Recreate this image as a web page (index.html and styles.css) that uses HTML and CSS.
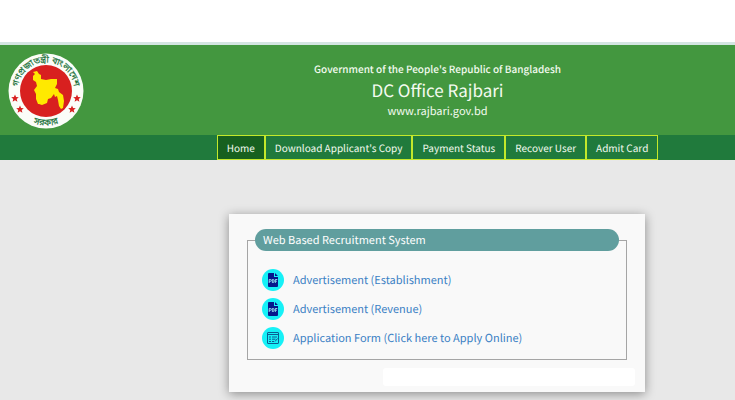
FILE: index.html
```html
<!DOCTYPE html>
<html lang="en">
  <head>
    <meta charset="utf-8" />
    <meta name="viewport" content="width=device-width, initial-scale=1.0" />
    <title>DC Office Rajbari</title>
    <link rel="stylesheet" href="styles.css">
  </head>

  <body>
    <header class="header">
      <a class="logo" href="#" aria-label="Government of Bangladesh">
        <svg viewBox="0 0 76 76" width="76" height="76">
          <defs>
            <path id="arc-top" d="M10.500 44 A28.200 28.200 0 1 1 65.500 44" />
            <path id="arc-bottom" d="M8 55 A34.500 34.500 0 0 0 68 55" />
          </defs>
          <circle cx="38" cy="38" r="37.500" fill="#fbfdf8" />
          <circle cx="38" cy="38" r="26" fill="#d8201f" />
          <path fill="#ffe900" d="M25 19l4-1 2 3 2 1 0 4 5 1 5-1 6 0 0 5-2 4 3 1 1 3 4 3 1 6-1 7-2 1-2-3-1-6-1-4-2 1-1-3-3 4-3 1-1 4-5 2-3-1-1 0-2-5 0-5-2-4 3-4-1-4-3-2 0-4 2-2z" />
          <text class="seal-text"><textPath href="#arc-top" startOffset="50%">গণপ্রজাতন্ত্রী বাংলাদেশ</textPath></text>
          <text class="seal-text"><textPath href="#arc-bottom" startOffset="50%">সরকার</textPath></text>
          <g fill="#d8201f">
            <path id="star" d="M7 41.500l1.100 2.500 2.700.2-2.100 1.800.7 2.700L7 47.300l-2.400 1.400.7-2.700-2.100-1.800 2.700-.2z" />
            <use href="#star" x="5" y="11" />
            <use href="#star" x="62" />
            <use href="#star" x="57" y="11" />
          </g>
        </svg>
      </a>
      <div class="title">
        <p class="gov">Government of the People's Republic of Bangladesh</p>
        <h1 class="office">DC Office Rajbari</h1>
        <p class="site">www.rajbari.gov.bd</p>
      </div>
    </header>

    <nav class="menu">
      <a class="menu-item active" href="#">Home</a>
      <a class="menu-item" href="#">Download Applicant's Copy</a>
      <a class="menu-item" href="#">Payment Status</a>
      <a class="menu-item" href="#">Recover User</a>
      <a class="menu-item" href="#">Admit Card</a>
    </nav>

    <main class="content">
      <section class="card">
        <fieldset class="box">
          <legend class="box-title">Web Based Recruitment System</legend>
          <ul class="links">
            <li>
              <a class="link" href="#">
                <svg class="icon" viewBox="0 0 22 22" width="22" height="22">
                  <circle cx="11" cy="11" r="11" fill="#16f1f7" />
                  <path fill="#06188c" d="M7 4h5v4h4v9q0 1-1 1H7q-1 0-1-1V5q0-1 1-1zM13 4l3 3h-3z" />
                  <path fill="none" stroke="#9ceaf5" stroke-width=".9" d="M7.200 14v-3.500h1.300q.8 0 .8.900t-.8.900H7.200M10.300 10.500v3h.7q1.200 0 1.200-1.500t-1.200-1.500zM13.300 14v-3.500h2M13.300 12.200h1.600" />
                </svg>
                <span>Advertisement (Establishment)</span>
              </a>
            </li>
            <li>
              <a class="link" href="#">
                <svg class="icon" viewBox="0 0 22 22" width="22" height="22">
                  <circle cx="11" cy="11" r="11" fill="#16f1f7" />
                  <path fill="#06188c" d="M7 4h5v4h4v9q0 1-1 1H7q-1 0-1-1V5q0-1 1-1zM13 4l3 3h-3z" />
                  <path fill="none" stroke="#9ceaf5" stroke-width=".9" d="M7.200 14v-3.500h1.300q.8 0 .8.900t-.8.900H7.200M10.300 10.500v3h.7q1.200 0 1.200-1.500t-1.200-1.500zM13.300 14v-3.500h2M13.300 12.200h1.600" />
                </svg>
                <span>Advertisement (Revenue)</span>
              </a>
            </li>
            <li>
              <a class="link" href="#">
                <svg class="icon" viewBox="0 0 22 22" width="22" height="22">
                  <circle cx="11" cy="11" r="11" fill="#16f1f7" />
                  <g fill="none" stroke="#0b5c92">
                    <rect x="5.500" y="5.500" width="11" height="11" rx=".5" />
                    <path d="M5.500 7.500h11M7 10h2M10 10h5M7 12.200h2M10 12.200h3.500M7 14.500h2M10 14.500h2M13 14.500l2.500-3" />
                  </g>
                </svg>
                <span>Application Form (Click here to Apply Online)</span>
              </a>
            </li>
          </ul>
        </fieldset>
        <div class="card-foot"></div>
      </section>
    </main>
  </body>
</html>
```

FILE: styles.css
```css
* {
  box-sizing: border-box;
}

body {
  margin: 0;
  padding-top: 42px;
  background: linear-gradient(#fff 42px, #e8e8e8 42px);
  font-family: "Noto Sans CJK SC", "Noto Sans", sans-serif;
  text-rendering: geometricPrecision;
  min-height: 100vh;
}

a {
  text-decoration: none;
}

/* header */
.header {
  display: grid;
  grid-template-columns: 140px 1fr;
  border-top: 3px solid #d3e5e1;
  background: #43973f;
  color: #f4fbf0;
}

.logo {
  padding: 8px 0 0 8px;
  height: 90px;
}

.seal-text {
  font-family: "Noto Sans Bengali", "Noto Sans", sans-serif;
  font-size: 9px;
  fill: #23733d;
  stroke: #23733d;
  stroke-width: 0.2px;
  text-anchor: middle;
}

.title {
  padding-top: 14px;
  text-align: center;
}

.gov,
.office,
.site {
  margin: 0;
  font-weight: normal;
}

.gov {
  font-size: 10px;
  font-weight: 500;
  line-height: 20px;
}

.office {
  font-size: 17px;
  line-height: 22px;
}

.site {
  font-size: 11px;
  line-height: 20px;
}

/* menu */
.menu {
  display: flex;
  justify-content: center;
  padding-left: 140px;
  background: #207a3c;
}

.menu-item {
  padding: 0 9px;
  border: 1px solid #c3e82b;
  color: #f4fbf0;
  font-size: 10px;
  line-height: 23px;
  white-space: nowrap;
}

.menu-item.active {
  background: #17601f;
}

/* content */
.content {
  padding: 54px 90px 8px 229px;
}

.card {
  padding: 15px 18px 6px;
  background: #f9f9f9;
  box-shadow: 0 2px 10px rgba(0, 0, 0, 0.4);
}

.box {
  margin: 0;
  padding: 18px 14px 10px;
  border: 1px solid #a5a5a5;
  min-width: 0;
}

.box-title {
  width: calc(100% + 14px);
  margin: 0 -7px;
  padding: 0 8px;
  border-radius: 11px;
  background: #609e9e;
  color: #fff;
  font-size: 11px;
  line-height: 22px;
}

.links {
  display: flex;
  flex-direction: column;
  gap: 7px;
  margin: 0;
  padding: 0;
  list-style: none;
}

.link {
  display: flex;
  align-items: center;
  gap: 9px;
  color: #3a80c4;
  font-size: 11px;
  line-height: 22px;
}

.icon {
  flex: none;
}

.card-foot {
  height: 18px;
  margin: 8px -8px 0 136px;
  border-radius: 3px;
  background: #fff;
}
```
